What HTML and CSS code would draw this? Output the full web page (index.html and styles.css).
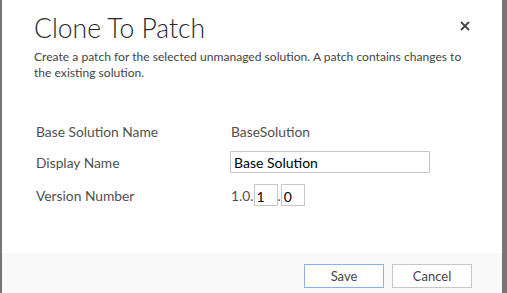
FILE: index.html
```html
<!DOCTYPE html>
<html>
<head>
    <title>Clone To Patch</title>
    <link rel="stylesheet" href="styles.css">
</head>
<body>
    <div class="dialog">
        <div class="dialog-body">
            <div class="dialog-header">
                <h1>Clone To Patch</h1>
                <button class="close-btn" title="Close">
                    <svg width="10" height="10" viewBox="0 0 10 10">
                        <path d="M1 1 L9 9 M9 1 L1 9" stroke="#444" stroke-width="1.8"/>
                    </svg>
                </button>
            </div>
            <p class="description">Create a patch for the selected unmanaged solution. A patch contains changes to the existing solution.</p>

            <div class="form-grid">
                <div class="label">Base Solution Name</div>
                <div class="value">BaseSolution</div>

                <div class="label">Display Name</div>
                <div class="value"><input type="text" class="name-input" value="Base Solution"></div>

                <div class="label">Version Number</div>
                <div class="value version">
                    <span>1.0.</span><input type="text" class="ver-input" value="1"><span>.</span><input type="text" class="ver-input" value="0">
                </div>
            </div>
        </div>

        <div class="dialog-footer">
            <button class="btn btn-primary">Save</button>
            <button class="btn">Cancel</button>
        </div>
    </div>
</body>
</html>
```

FILE: styles.css
```css
html, body {
    height: 100%;
}
body {
    margin: 0;
    padding: 0 5px 0 2px;
    background-color: #767676;
    font-family: "Segoe UI", Lato, "Open Sans", Arial, sans-serif;
    color: #444;
    box-sizing: border-box;
}
.dialog {
    background-color: #fff;
    height: 293px;
    display: flex;
    flex-direction: column;
}
.dialog-body {
    flex: 1;
    padding: 0 32px;
}
.dialog-header {
    display: flex;
    justify-content: space-between;
    align-items: flex-start;
}
h1 {
    margin: 10px 0 0 0;
    font-size: 26.5px;
    font-weight: 300;
    color: #262626;
    line-height: 36px;
}
.close-btn {
    margin: 21px 0 0 0;
    padding: 0;
    border: none;
    background: none;
    width: 10px;
    height: 10px;
    cursor: pointer;
}
.close-btn svg {
    display: block;
}
.description {
    margin: 3px 0 0 0;
    max-width: 436px;
    font-size: 12.1px;
    line-height: 16px;
    color: #444;
}
.form-grid {
    display: grid;
    grid-template-columns: 195px 1fr;
    grid-template-rows: 31px 30px 36px;
    margin: 35px 0 0 2px;
    font-size: 13.8px;
    color: #505050;
}
.label, .value {
    display: flex;
    align-items: center;
}
.name-input {
    width: 200px;
    height: 22px;
    box-sizing: border-box;
    border: 1px solid #c6c6c6;
    padding: 0 3px;
    font-family: inherit;
    font-size: 14px;
    color: #000;
    margin-left: -1px;
}
.version {
    color: #505050;
}
.ver-input {
    width: 24px;
    height: 22px;
    box-sizing: border-box;
    border: 1px solid #c6c6c6;
    padding: 2px 0 0 2px;
    font-family: inherit;
    font-size: 14px;
    color: #000;
}
.dialog-footer {
    height: 40px;
    background-color: #f8f8f8;
    display: flex;
    justify-content: flex-end;
    align-items: flex-start;
    gap: 8px;
    padding: 11px 30px 0 0;
    box-sizing: border-box;
}
.btn {
    width: 80px;
    height: 24px;
    background-color: #fff;
    border: 1px solid #c6c6c6;
    font-family: inherit;
    font-size: 13px;
    color: #444;
    cursor: pointer;
}
.btn-primary {
    border-color: #8cb0ec;
}
```
